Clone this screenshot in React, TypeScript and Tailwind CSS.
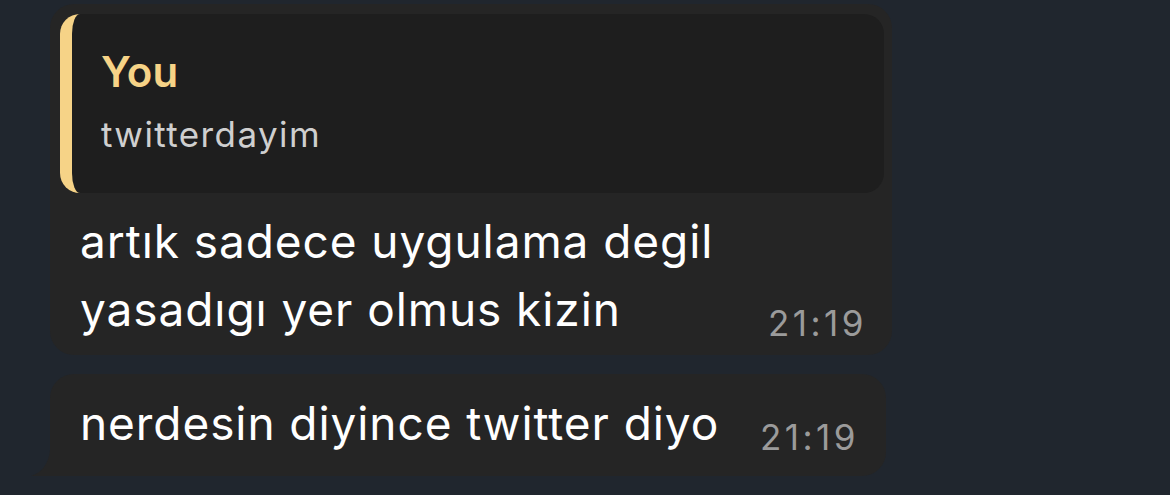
export default function App() {
  return (
    <div
      className="w-[1170px] h-[495px] overflow-hidden bg-[#20262e] pt-[4px]"
      style={{ fontFamily: "Inter, 'Noto Sans', sans-serif" }}
    >
      <div className="ml-[50px] flex flex-col gap-[19px]">
        {/* reply bubble */}
        <div className="w-[842px] rounded-[24px] bg-[#252525] pl-[10px] pr-[8px] pt-[10px] pb-[12px]">
          <div className="h-[179px] rounded-[20px] border-l-[12px] border-[#f6d387] bg-[#1e1e1e] pl-[29px] pt-[36px]">
            <div className="text-[42px] font-semibold leading-[44px] text-[#f6d387]">You</div>
            <div className="mt-[20px] text-[35px] tracking-[0.04em] leading-[40px] text-[#cfcfcf]">twitterdayim</div>
          </div>
          <div className="mt-[14px] flex items-end pl-[20px] pr-[20px]">
            <div className="flex-1 text-[46px] tracking-[0.02em] leading-[68px] text-white">
              artık sadece uygulama degil
              <br />
              yasadıgı yer olmus kizin
            </div>
            <div className="text-[35px] tracking-[0.1em] leading-[40px] text-[#9b9b9b] mr-[-3px]">21:19</div>
          </div>
        </div>

        {/* last bubble with tail */}
        <div className="relative w-[836px] h-[102px] rounded-[24px] rounded-bl-none bg-[#252525]">
          <svg
            className="absolute left-[-19px] bottom-0"
            width="24"
            height="34"
            viewBox="0 0 24 34"
          >
            <path d="M19 0 L24 0 L24 34 L0 34 C10 31 18 22 19 8 Z" fill="#252525" />
          </svg>
          <div className="flex items-end h-full pl-[30px] pr-[30px] pb-[19px]">
            <div className="flex-1 text-[46px] tracking-[0.02em] leading-[68px] text-white">nerdesin diyince twitter diyo</div>
            <div className="text-[35px] tracking-[0.1em] leading-[40px] text-[#9b9b9b] mr-[-3px]">21:19</div>
          </div>
        </div>
      </div>
    </div>
  );
}
